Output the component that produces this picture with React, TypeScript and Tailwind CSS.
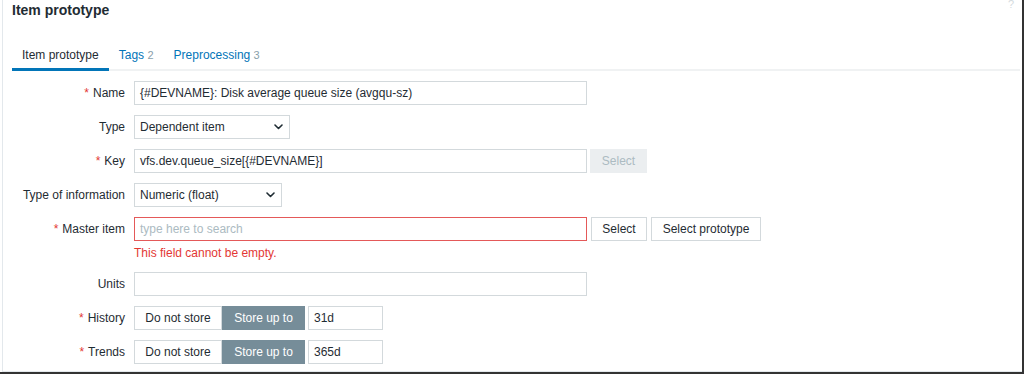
import { ReactNode } from 'react'

const font = "font-['Liberation_Sans',Arial,sans-serif]"

function Chevron() {
  return (
    <svg width="9" height="6" viewBox="0 0 9 6" fill="none" className="shrink-0">
      <path d="M1 1l3.5 3.5L8 1" stroke="#1f2c33" strokeWidth="1.6" strokeLinecap="round" strokeLinejoin="round" />
    </svg>
  )
}

function Label({ children, required }: { children: ReactNode; required?: boolean }) {
  return (
    <div className="w-[122px] shrink-0 h-6 leading-6 text-right pr-0">
      {required && <span className="text-[#e33734] mr-[4px]">*</span>}
      {children}
    </div>
  )
}

function Input({ value, width = 'w-[453px]', placeholder, error }: { value?: string; width?: string; placeholder?: string; error?: boolean }) {
  return (
    <div
      className={`${width} h-6 leading-[22px] px-[5px] border bg-white ${error ? 'border-[#e45959]' : 'border-[#d3d9dc]'}`}
    >
      {value ? <span>{value}</span> : <span className="text-[#acbbc2]">{placeholder}</span>}
    </div>
  )
}

function Select({ value, width }: { value: string; width: string }) {
  return (
    <div className={`${width} h-6 flex items-center justify-between pl-[5px] pr-[6px] border border-[#d3d9dc] bg-white`}>
      <span>{value}</span>
      <Chevron />
    </div>
  )
}

function Button({ children, width, disabled }: { children: ReactNode; width: string; disabled?: boolean }) {
  return (
    <div
      className={`${width} h-6 leading-[22px] text-center border ${
        disabled ? 'bg-[#ebeef0] border-[#ebeef0] text-[#acbbc2]' : 'bg-white border-[#d3d9dc] text-[#1f2c33]'
      }`}
    >
      {children}
    </div>
  )
}

function Storage({ value }: { value: string }) {
  return (
    <div className="flex items-center">
      <div className="w-[88px] h-6 leading-[22px] text-center border border-[#d3d9dc] bg-white">Do not store</div>
      <div className="w-[83px] h-6 leading-6 text-center bg-[#768d99] text-white">Store up to</div>
      <div className="ml-[3px] w-[75px] h-6 leading-[22px] px-[5px] border border-[#d3d9dc] bg-white">{value}</div>
    </div>
  )
}

function Row({ children }: { children: ReactNode }) {
  return <div className="flex items-start gap-[9px]">{children}</div>
}

export default function App() {
  return (
    <div className={`w-[1024px] h-[374px] bg-white pl-[2px] border-r-2 border-b-2 border-[#333333] text-[12px] text-[#1f2c33] ${font}`}>
      <div className="h-full border-l border-b border-[#e3e8ec] flex flex-col relative">
        <span className="absolute right-[8px] top-[-4px] text-[11px] text-[#d5dbde]">?</span>

        <h1 className="pl-[9px] h-5 leading-5 text-[14px] font-bold text-[#1f2c33]">Item prototype</h1>

        <div className="mt-[28px] ml-[9px] mr-[2px] flex border-b-2 border-[#f0f2f3]">
          <div className="px-[10px] pb-[6px] leading-[14px] border-b-[3px] border-[#0275b8] -mb-[2px]">Item prototype</div>
          <div className="px-[10px] pb-[6px] leading-[14px] text-[#0275b8]">
            Tags <span className="text-[11px] text-[#8aa0ab]">2</span>
          </div>
          <div className="px-[10px] pb-[6px] leading-[14px] text-[#0275b8]">
            Preprocessing <span className="text-[11px] text-[#8aa0ab]">3</span>
          </div>
        </div>

        <div className="mt-[10px] flex flex-col gap-[10px]">
          <Row>
            <Label required>Name</Label>
            <Input value="{#DEVNAME}: Disk average queue size (avgqu-sz)" />
          </Row>
          <Row>
            <Label>Type</Label>
            <Select value="Dependent item" width="w-[156px]" />
          </Row>
          <Row>
            <Label required>Key</Label>
            <div className="flex gap-[3px]">
              <Input value="vfs.dev.queue_size[{#DEVNAME}]" />
              <Button width="w-[57px]" disabled>Select</Button>
            </div>
          </Row>
          <Row>
            <Label>Type of information</Label>
            <Select value="Numeric (float)" width="w-[148px]" />
          </Row>
          <Row>
            <Label required>Master item</Label>
            <div className="flex flex-col">
              <div className="flex gap-[4px]">
                <Input placeholder="type here to search" error />
                <Button width="w-[56px]">Select</Button>
                <Button width="w-[110px]">Select prototype</Button>
              </div>
              <div className="mt-[5px] mb-[2px] leading-[14px] text-[#e33734]">This field cannot be empty.</div>
            </div>
          </Row>
          <Row>
            <Label>Units</Label>
            <Input value="" />
          </Row>
          <Row>
            <Label required>History</Label>
            <Storage value="31d" />
          </Row>
          <Row>
            <Label required>Trends</Label>
            <Storage value="365d" />
          </Row>
        </div>
      </div>
    </div>
  )
}
